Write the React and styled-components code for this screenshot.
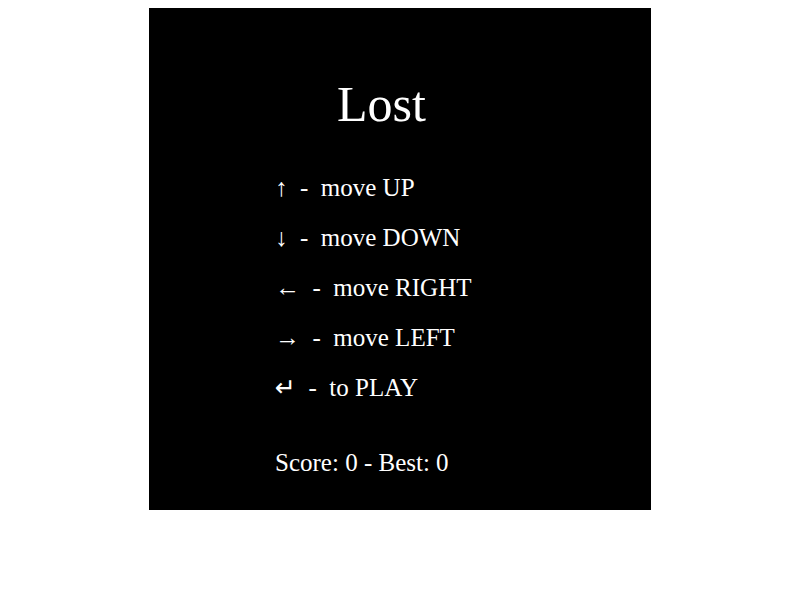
import styled, { createGlobalStyle } from "styled-components";

const GlobalStyle = createGlobalStyle`
    body {
        margin: 8px;
        background-color: #ffffff;
        font-family: "Liberation Serif", "DejaVu Serif", serif;
    }
`;

const keys = [
    { key: "↑", action: "move UP" },
    { key: "↓", action: "move DOWN" },
    { key: "←", action: "move RIGHT" },
    { key: "→", action: "move LEFT" },
    { key: "↵", action: "to PLAY", sans: true },
];

const App = () => {
    const score = 0;
    const best = 0;
    return (
        <>
            <GlobalStyle/>
            <Board>
                <Menu>
                    <Title>Lost</Title>
                    <KeyList>
                        {keys.map(({ key, action, sans }) => (
                            <KeyRow key={action}>
                                <KeyGlyph $sans={sans}>{key}</KeyGlyph>
                                {`  -  ${action}`}
                            </KeyRow>
                        ))}
                    </KeyList>
                    <ScoreText>Score: {score} - Best: {best}</ScoreText>
                </Menu>
            </Board>
        </>
    )
}
const Board = styled.div`
    width: 502px;
    height: 502px;
    margin: 0 auto;
    box-sizing: border-box;
    padding: 68px 0 0 126px;
    background-color: #000000;
    color: #ffffff;
`;
const Menu = styled.div`
    width: 213px;
    display: flex;
    flex-direction: column;
`;
const Title = styled.h1`
    margin: 0;
    font-size: 50px;
    font-weight: normal;
    line-height: 57.5px;
    text-align: center;
`;
const KeyList = styled.div`
    margin-top: 29px;
    display: flex;
    flex-direction: column;
`;
const KeyRow = styled.div`
    height: 50px;
    font-size: 25px;
    line-height: 50px;
    white-space: pre;
`;
const KeyGlyph = styled.span`
    font-family: ${({ $sans }) => ($sans ? `"DejaVu Sans", sans-serif` : "inherit")};
`;
const ScoreText = styled.div`
    margin-top: 25px;
    font-size: 25px;
    line-height: 50px;
    white-space: nowrap;
`;
export default App;
